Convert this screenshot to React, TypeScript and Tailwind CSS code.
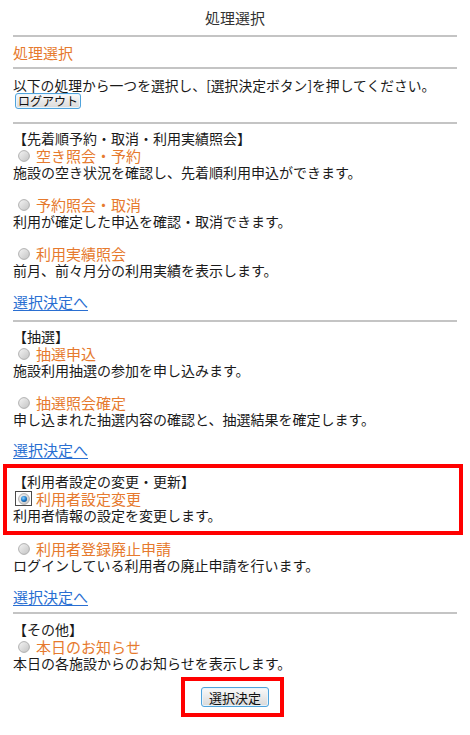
import React from 'react';

const Hr: React.FC<{ className?: string }> = ({ className = '' }) => (
  <div className={`h-[2px] bg-[#c4c4c4] ${className}`} />
);

const Radio: React.FC<{ checked?: boolean }> = ({ checked }) => (
  <span
    className={`ml-[2px] mr-[4px] inline-flex h-[15px] w-[17px] shrink-0 items-center justify-center border ${
      checked ? 'border-[#4a4a4a]' : 'border-transparent'
    }`}
  >
    <svg width="12" height="12" viewBox="0 0 12 12">
      <defs>
        <linearGradient id="rg" x1="0" y1="0" x2="1" y2="1">
          <stop offset="0" stopColor="#f5f5f5" />
          <stop offset="1" stopColor="#c2c2c2" />
        </linearGradient>
        <radialGradient id="dot" cx="0.4" cy="0.35" r="0.7">
          <stop offset="0" stopColor="#8fd3ff" />
          <stop offset="0.6" stopColor="#1f7fcf" />
          <stop offset="1" stopColor="#0c4f8f" />
        </radialGradient>
      </defs>
      <circle cx="6" cy="6" r="5.4" fill="url(#rg)" stroke="#a9a9a9" strokeWidth="0.9" />
      {checked && <circle cx="6" cy="6" r="3" fill="url(#dot)" />}
    </svg>
  </span>
);

const Option: React.FC<{ label: string; desc: string; checked?: boolean; className?: string }> = ({
  label,
  desc,
  checked,
  className = '',
}) => (
  <div className={className}>
    <div className="flex h-[17px] items-center">
      <Radio checked={checked} />
      <span className="text-[15px] text-[#e67a2e]">{label}</span>
    </div>
    <div>{desc}</div>
  </div>
);

const Btn: React.FC<{ children: React.ReactNode; className?: string }> = ({ children, className = '' }) => (
  <button
    className={`flex items-center justify-center rounded-[3px] border border-[#4fa3dc] bg-gradient-to-b from-[#fafafa] to-[#d9d9d9] text-[#111] shadow-[inset_0_0_0_1px_#e8f4fc] ${className}`}
  >
    {children}
  </button>
);

const Link: React.FC<{ className?: string }> = ({ className = '' }) => (
  <div className={className}>
    <a className="text-[15px] text-[#2a6fd2] underline underline-offset-2">選択決定へ</a>
  </div>
);

export default function App() {
  return (
    <div className="relative min-h-[735px] w-[470px] bg-white font-['Noto_Sans_CJK_JP',sans-serif] text-[14px] leading-[17px] text-[#1a1a1a]">
      <div className="flex h-[35px] items-center justify-center text-[15px] text-[#333]">処理選択</div>
      <div className="mx-[13px]">
        <Hr />
        <div className="flex h-[30px] items-center text-[15px] text-[#e67a2e]">処理選択</div>
        <Hr />
        <div className="pt-[8px] text-[13.8px]">以下の処理から一つを選択し、[選択決定ボタン]を押してください。</div>
        <Btn className="ml-[2px] -mt-[1px] h-[16px] w-[66px] text-[12px] leading-none">ログアウト</Btn>

        <Hr className="mt-[13px]" />
        <div className="pt-[6px]">【先着順予約・取消・利用実績照会】</div>
        <Option label="空き照会・予約" desc="施設の空き状況を確認し、先着順利用申込ができます。" />
        <Option className="mt-[15px]" label="予約照会・取消" desc="利用が確定した申込を確認・取消できます。" />
        <Option className="mt-[15px]" label="利用実績照会" desc="前月、前々月分の利用実績を表示します。" />
        <Link className="mt-[14px]" />

        <Hr className="mt-[9px]" />
        <div className="pt-[6px]">【抽選】</div>
        <Option label="抽選申込" desc="施設利用抽選の参加を申し込みます。" />
        <Option className="mt-[15px]" label="抽選照会確定" desc="申し込まれた抽選内容の確認と、抽選結果を確定します。" />
        <Link className="mt-[13px]" />

        <div className="relative mt-[5px]">
          <Hr />
          <div className="pt-[7px]">【利用者設定の変更・更新】</div>
          <Option label="利用者設定変更" desc="利用者情報の設定を変更します。" checked />
          <div className="pointer-events-none absolute left-[-10px] right-[-6px] top-0 h-[71px] border-4 border-[#ff0000]" />
        </div>
        <Option className="mt-[16px]" label="利用者登録廃止申請" desc="ログインしている利用者の廃止申請を行います。" />
        <Link className="mt-[14px]" />

        <Hr className="mt-[6px]" />
        <div className="pt-[7px]">【その他】</div>
        <Option label="本日のお知らせ" desc="本日の各施設からのお知らせを表示します。" />

        <div className="mt-[15px] flex justify-center">
          <div className="relative">
            <Btn className="h-[20px] w-[68px] text-[13px] leading-none">選択決定</Btn>
            <div className="pointer-events-none absolute -bottom-[10px] -left-[20px] -right-[15px] -top-[10px] border-4 border-[#ff0000]" />
          </div>
        </div>
      </div>
    </div>
  );
}
